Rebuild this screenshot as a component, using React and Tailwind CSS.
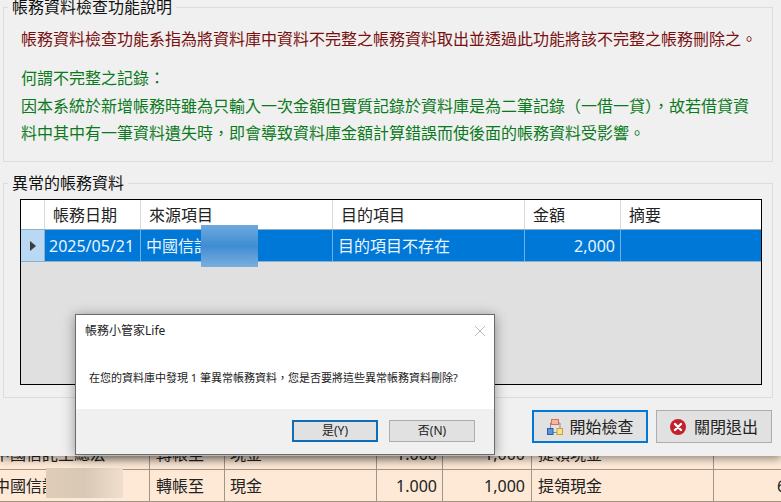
import React from "react";

const font = { fontFamily: '"Noto Sans", "Noto Sans CJK TC", sans-serif' };

function CheckIcon() {
  return (
    <svg width="18" height="18" viewBox="0 0 18 18" className="shrink-0">
      <path d="M9 5H4.5V12M9 5H14V12M6 14.5H11" fill="none" stroke="#8a8f96" strokeWidth="1" />
      <rect x="5.5" y="1.5" width="7" height="5" fill="#f5b6a6" stroke="#d9705c" />
      <rect x="1.5" y="10.5" width="5.5" height="6" fill="#5b93d8" stroke="#2c5fa8" />
      <rect x="11" y="10.5" width="5.5" height="6" fill="#fbe08a" stroke="#c9a23c" />
    </svg>
  );
}

function CloseIcon() {
  return (
    <svg width="16" height="16" viewBox="0 0 16 16" className="shrink-0">
      <circle cx="8" cy="8" r="8" fill="#c4202b" />
      <path d="M5 5L11 11M11 5L5 11" stroke="#fff" strokeWidth="2.4" strokeLinecap="round" />
    </svg>
  );
}

function Group({ title, className, legendClass, children }) {
  return (
    <fieldset className={`border border-[#dcdcdc] ${className}`}>
      <legend className={`ml-[4px] px-[4px] text-[16px] text-[#111] ${legendClass}`}>{title}</legend>
      {children}
    </fieldset>
  );
}

const HEAD = ["帳務日期", "來源項目", "目的項目", "金額", "摘要"];
const COLS = "grid grid-cols-[24px_96px_192px_192px_96px_1fr]";

function LowerRow({ first, last }) {
  const cell = "border-r border-b border-[#a39488] flex items-center px-[6px] overflow-hidden whitespace-nowrap";
  return (
    <div className="grid h-[32px] grid-cols-[150px_75px_152px_66px_89px_182px_67px] text-[16px] text-[#222]">
      <div className={cell}><span className="-ml-[12px]">{first}</span></div>
      <div className={cell}>轉帳至</div>
      <div className={`${cell} pl-[5px]`}>現金</div>
      <div className={`${cell} justify-end pr-[5px]`}>1.000</div>
      <div className={`${cell} justify-end`}>1,000</div>
      <div className={cell}>提領現金</div>
      <div className="border-b border-[#a39488] flex items-center pl-[63px] overflow-hidden">{last}</div>
    </div>
  );
}

export default function App() {
  return (
    <div lang="zh-TW" style={font} className="relative h-[502px] w-[781px] overflow-hidden bg-[#fde9d6]">
      <div className="relative z-10 flex h-[456px] flex-col bg-[#f0f0f0] px-[3px] shadow-[0_3px_8px_rgba(0,0,0,0.4)]">
        <Group title="帳務資料檢查功能說明" className="h-[162px] w-[770px] shrink-0" legendClass="leading-[15px]">
          <div className="pl-[17px] pt-[10px] text-[16px] whitespace-nowrap">
            <p className="leading-[28px] text-[#7a0f0f]">帳務資料檢查功能系指為將資料庫中資料不完整之帳務資料取出並透過此功能將該不完整之帳務刪除之。</p>
            <div className="mt-[12px] leading-[27.5px] text-[#0b7a1c]">
              <p>何謂不完整之記錄：</p>
              <p>因本系統於新增帳務時雖為只輸入一次金額但實質記錄於資料庫是為二筆記錄（一借一貸），故若借貸資</p>
              <p>料中其中有一筆資料遺失時，即會導致資料庫金額計算錯誤而使後面的帳務資料受影響。</p>
            </div>
          </div>
        </Group>

        <Group title="異常的帳務資料" className="mt-[11px] h-[225px] w-[770px] shrink-0" legendClass="leading-[20px]">
          <div className="relative ml-[16px] mt-[6px] h-[186px] w-[742px] border border-black bg-[#e0e0e0]">
            <div className={`${COLS} h-[30px] border-b border-[#8fb0c8] bg-white text-[16px] text-[#222]`}>
              <div className="border-r border-[#d9d9d9]" />
              {HEAD.map((h) => (
                <div key={h} className="flex items-center border-r border-[#d9d9d9] pl-[8px] last:border-r-0">{h}</div>
              ))}
            </div>
            <div className={`${COLS} h-[32px] border-b border-[#8fb0c8] bg-[#0078d7] text-[16px] text-[#eaf4fc]`}>
              <div className="flex items-center justify-center border-r border-[#8fb0c8] bg-[#b8d8f3]">
                <svg width="6" height="10" viewBox="0 0 6 10"><path d="M0 0L6 5L0 10Z" fill="#3c3c3c" /></svg>
              </div>
              <div className="flex items-center border-r border-[#6eb0e6] pl-[4px]">2025/05/21</div>
              <div className="flex items-center border-r border-[#6eb0e6] pl-[5px]">中國信託</div>
              <div className="flex items-center border-r border-[#6eb0e6] pl-[5px]">目的項目不存在</div>
              <div className="flex items-center justify-end border-r border-[#6eb0e6] pr-[5px]">2,000</div>
              <div />
            </div>
            <div className="absolute left-[180px] top-[25px] h-[42px] w-[57px] bg-gradient-to-b from-[#6ea9de] via-[#3d8dd3] to-[#7aaedd]" />
          </div>
        </Group>

        <div className="mt-[12px] flex justify-end gap-[8px] pr-[6px] text-[16px] text-[#222]">
          <button className="flex h-[33px] w-[116px] items-center justify-center gap-[5px] border-2 border-[#0078d7] bg-[#e1e1e1]">
            <CheckIcon />開始檢查
          </button>
          <button className="flex h-[33px] w-[116px] items-center justify-center gap-[8px] border border-[#adadad] bg-[#e1e1e1]">
            <CloseIcon />關閉退出
          </button>
        </div>
      </div>

      <div className="relative -mt-[18px]">
        <LowerRow first="中國信託王總宏" last="" />
        <LowerRow first="中國信託" last="6" />
        <div className="absolute left-[46px] top-[30px] h-[30px] w-[77px] bg-gradient-to-r from-[#dfcdb8] via-[#d9c8b5] to-[#f0dfcc]" />
      </div>

      <div className="absolute left-[75px] top-[314px] z-20 flex h-[141px] w-[420px] flex-col border border-[#6b6b6b] bg-white text-[12px] text-[#222] shadow-[0_2px_12px_rgba(0,0,0,0.4)]">
        <div className="flex items-center justify-between pl-[9px] pr-[8px] pt-[7px]">
          <span className="leading-[18px]">帳務小管家Life</span>
          <svg width="12" height="12" viewBox="0 0 12 12"><path d="M1 1L11 11M11 1L1 11" stroke="#b8b8b8" strokeWidth="1" /></svg>
        </div>
        <div className="flex flex-1 items-start pl-[13px] pt-[29px]">
          <p className="whitespace-nowrap text-[11px] leading-[18px]">在您的資料庫中發現 1 筆異常帳務資料，您是否要將這些異常帳務資料刪除?</p>
        </div>
        <div className="flex h-[45px] justify-end gap-[11px] bg-[#f0f0f0] pr-[19px] pt-[11px]">
          <button className="h-[22px] w-[86px] border-2 border-[#0f6cb5] bg-[#e1e1e1] leading-none">是(Y)</button>
          <button className="h-[22px] w-[86px] border border-[#adadad] bg-[#e1e1e1] leading-none">否(N)</button>
        </div>
      </div>
    </div>
  );
}
